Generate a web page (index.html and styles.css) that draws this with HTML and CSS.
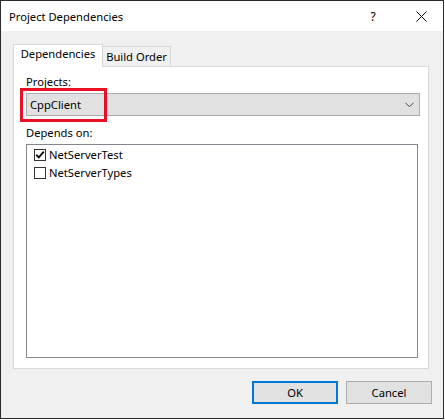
FILE: index.html
```html
<!DOCTYPE html>
<html>
<head>
<meta charset="utf-8">
<link rel="stylesheet" href="styles.css">
</head>
<body>
<div class="window">
  <div class="titlebar">
    <span class="title">Project Dependencies</span>
    <span class="cap-btn help">?</span>
    <span class="cap-btn close">
      <svg width="11" height="11" viewBox="0 0 11 11"><path d="M0.5 0.5 L10.5 10.5 M10.5 0.5 L0.5 10.5" stroke="#000" stroke-width="1" fill="none"/></svg>
    </span>
  </div>
  <div class="client">
    <div class="tabs">
      <div class="tab active">Dependencies</div>
      <div class="tab">Build Order</div>
    </div>
    <div class="panel">
      <div class="label projects">Projects:</div>
      <div class="combo-wrap">
        <div class="combo">
          <span class="combo-text">CppClient</span>
          <svg class="chevron" width="9" height="6" viewBox="0 0 9 6"><path d="M0.5 0.8 L4.5 4.8 L8.5 0.8" stroke="#4a4a4a" stroke-width="1" fill="none"/></svg>
        </div>
        <div class="highlight"></div>
      </div>
      <div class="label depends">Depends on:</div>
      <div class="listbox">
        <div class="row">
          <span class="check checked"><svg width="10" height="10" viewBox="0 0 10 10"><path d="M1.2 4.8 L3.8 7.4 L8.8 1.6" stroke="#000" stroke-width="1.7" fill="none"/></svg></span>
          <span>NetServerTest</span>
        </div>
        <div class="row">
          <span class="check"></span>
          <span>NetServerTypes</span>
        </div>
      </div>
    </div>
    <div class="buttons">
      <button class="btn default">OK</button>
      <button class="btn">Cancel</button>
    </div>
  </div>
</div>
</body>
</html>
```
FILE: styles.css
```css
html, body {
  margin: 0;
  padding: 0;
  background: #fff;
}
body {
  font-family: "Noto Sans", "Open Sans", sans-serif;
  font-size: 11.2px;
  line-height: 15px;
  color: #000;
}
.window {
  width: 444px;
  height: 419px;
  box-sizing: border-box;
  border: 1px solid #2b2b2b;
  background: #f0f0f0;
  display: flex;
  flex-direction: column;
}
.titlebar {
  height: 30px;
  background: #fff;
  display: flex;
  align-items: center;
  flex-shrink: 0;
}
.title {
  flex: 1;
  padding-left: 8px;
  font-size: 11.2px;
}
.cap-btn {
  width: 46px;
  height: 30px;
  display: flex;
  align-items: center;
  justify-content: center;
}
.help {
  font-size: 12px;
  padding-right: 1px;
}
.close svg {
  display: block;
  margin-left: 2px;
}
.client {
  padding: 13px 11px 0 12px;
}
.tabs {
  display: flex;
  align-items: flex-end;
  height: 22px;
}
.tab {
  box-sizing: border-box;
  height: 20px;
  width: 68px;
  border-top: 1px solid #d9d9d9;
  border-right: 1px solid #d9d9d9;
  background: #f0f0f0;
  text-align: center;
  padding-top: 2px;
}
.tab.active {
  width: 90px;
  height: 23px;
  margin-bottom: -1px;
  border: 1px solid #d9d9d9;
  border-bottom: none;
  background: #fff;
  position: relative;
  z-index: 1;
  padding-top: 1px;
}
.panel {
  box-sizing: border-box;
  width: 416px;
  height: 303px;
  border: 1px solid #d9d9d9;
  background: #fff;
  padding-left: 12px;
}
.label.projects {
  margin-top: 7px;
  margin-bottom: 4px;
}
.label.depends {
  margin-top: 9px;
  margin-bottom: 4px;
}
.combo-wrap {
  position: relative;
  width: 394px;
}
.combo {
  box-sizing: border-box;
  width: 394px;
  height: 23px;
  border: 1px solid #adadad;
  background: #e1e1e1;
  display: flex;
  align-items: center;
  justify-content: space-between;
  padding: 0 5px 0 3px;
  line-height: 21px;
}
.chevron {
  display: block;
  margin-top: 1px;
}
.highlight {
  position: absolute;
  left: -6px;
  top: -5px;
  width: 87px;
  height: 34px;
  box-sizing: border-box;
  border: 3px solid #e81123;
}
.listbox {
  box-sizing: border-box;
  width: 392px;
  height: 214px;
  border: 1px solid #828790;
  background: #fff;
  padding-top: 1px;
}
.row {
  height: 18px;
  line-height: 18px;
  display: flex;
  align-items: flex-start;
  padding-left: 7px;
}
.check {
  box-sizing: border-box;
  width: 12px;
  height: 12px;
  margin-top: 3px;
  margin-right: 3px;
  border: 1px solid #333;
  background: #fff;
  display: flex;
  align-items: center;
  justify-content: center;
}
.check svg {
  display: block;
}
.buttons {
  display: flex;
  justify-content: flex-end;
  gap: 8px;
  margin-top: 12px;
}
.btn {
  box-sizing: border-box;
  width: 86px;
  height: 23px;
  border: 1px solid #adadad;
  background: #e1e1e1;
  font-family: inherit;
  font-size: 11.2px;
  color: #000;
  padding: 0;
  line-height: 15px;
}
.btn.default {
  border: 2px solid #0078d7;
}
```
